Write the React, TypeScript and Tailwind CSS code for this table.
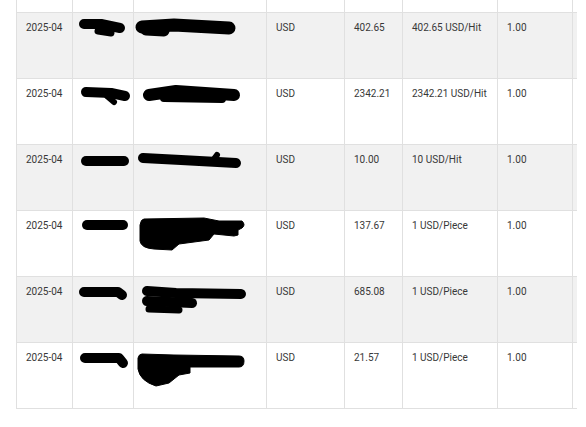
import React from "react";

type Stroke = { d: string; w: number; f?: boolean };
type Row = {
  date: string;
  currency: string;
  amount: string;
  rate: string;
  qty: string;
  s2: Stroke[];
  s3: Stroke[];
  gray: boolean;
};

const rows: Row[] = [
  {
    date: "2025-04",
    currency: "USD",
    amount: "402.65",
    rate: "402.65 USD/Hit",
    qty: "1.00",
    gray: true,
    s2: [
      { d: "M11,11 L28,11 L47,15", w: 10 },
      { d: "M25,18 L38,20", w: 7 },
    ],
    s3: [
      { d: "M8,14 L40,12 L95,15", w: 13 },
      { d: "M12,17 L30,18", w: 11 },
    ],
  },
  {
    date: "2025-04",
    currency: "USD",
    amount: "2342.21",
    rate: "2342.21 USD/Hit",
    qty: "1.00",
    gray: false,
    s2: [
      { d: "M13,13 L38,14 L52,17", w: 10 },
      { d: "M34,17 L41,23", w: 6 },
    ],
    s3: [
      { d: "M15,16 L42,12 L100,16", w: 12 },
      { d: "M30,19 L88,20", w: 8 },
    ],
  },
  {
    date: "2025-04",
    currency: "USD",
    amount: "10.00",
    rate: "10 USD/Hit",
    qty: "1.00",
    gray: true,
    s2: [{ d: "M13,16 L51,16", w: 10 }],
    s3: [
      { d: "M9,13 L47,15 L102,18", w: 10 },
      { d: "M80,14 L83,10", w: 6 },
    ],
  },
  {
    date: "2025-04",
    currency: "USD",
    amount: "137.67",
    rate: "1 USD/Piece",
    qty: "1.00",
    gray: false,
    s2: [{ d: "M14,14 L50,14", w: 10 }],
    s3: [
      {
        d: "M10,8 L70,7 L85,10 L108,10 Q112,14 108,17 L104,19 L104,24 L100,25 L80,23 L75,29 L45,33 L38,39 L20,38 Q7,37 6,30 L6,14 Q7,8 10,8 Z",
        w: 1,
        f: true,
      },
    ],
  },
  {
    date: "2025-04",
    currency: "USD",
    amount: "685.08",
    rate: "1 USD/Piece",
    qty: "1.00",
    gray: true,
    s2: [{ d: "M11,15 L45,15 L49,18", w: 10 }],
    s3: [
      { d: "M13,14 L42,16 L107,17", w: 10 },
      { d: "M13,24 L58,26", w: 10 },
      { d: "M15,32 L45,33", w: 7 },
    ],
  },
  {
    date: "2025-04",
    currency: "USD",
    amount: "21.57",
    rate: "1 USD/Piece",
    qty: "1.00",
    gray: false,
    s2: [{ d: "M12,15 L46,15 L50,20", w: 10 }],
    s3: [
      {
        d: "M8,11 L40,12 L105,13 Q110,13 110,18 Q110,24 105,24 L85,24 L56,24 L56,30 L45,32 L35,40 L22,43 Q6,38 4,26 L4,15 Q5,11 8,11 Z",
        w: 1,
        f: true,
      },
    ],
  },
];

const cols = "grid grid-cols-[56px_61px_133px_78px_58px_95px_75px_60px]";
const cell = "border-l border-[#e0e0e0] pl-[9px] pt-[8px] leading-[14px] relative overflow-hidden";

function Ink({ strokes }: { strokes: Stroke[] }) {
  return (
    <svg className="absolute left-0 top-0" width="140" height="60" viewBox="0 0 140 60">
      {strokes.map((s, i) =>
        s.f ? (
          <path key={i} d={s.d} fill="#000" stroke="#000" strokeWidth={s.w} strokeLinejoin="round" />
        ) : (
          <path
            key={i}
            d={s.d}
            stroke="#000"
            strokeWidth={s.w}
            strokeLinecap="round"
            strokeLinejoin="round"
            fill="none"
          />
        )
      )}
    </svg>
  );
}

export default function App() {
  return (
    <div
      className="w-[586px] h-[427px] bg-white overflow-hidden"
      style={{ fontFamily: "Roboto, 'Liberation Sans', sans-serif" }}
    >
      <div className="ml-[16px] w-[561px] overflow-hidden text-[10px] text-[#383838]">
        <div className={`${cols} h-[12px] bg-white`}>
          {Array.from({ length: 8 }).map((_, i) => (
            <div key={i} className="border-l border-[#e0e0e0]" />
          ))}
        </div>
        {rows.map((r, idx) => (
          <div
            key={idx}
            className={`${cols} border-t border-[#e0e0e0] ${
              idx === rows.length - 1 ? "h-[67px] border-b" : "h-[66px]"
            } ${r.gray ? "bg-[#f1f1f1]" : "bg-white"}`}
          >
            <div className={cell}>{r.date}</div>
            <div className={cell}>
              <Ink strokes={r.s2} />
            </div>
            <div className={cell}>
              <Ink strokes={r.s3} />
            </div>
            <div className={cell}>{r.currency}</div>
            <div className={cell}>{r.amount}</div>
            <div className={cell}>{r.rate}</div>
            <div className={cell}>{r.qty}</div>
            <div className={cell}></div>
          </div>
        ))}
      </div>
    </div>
  );
}
